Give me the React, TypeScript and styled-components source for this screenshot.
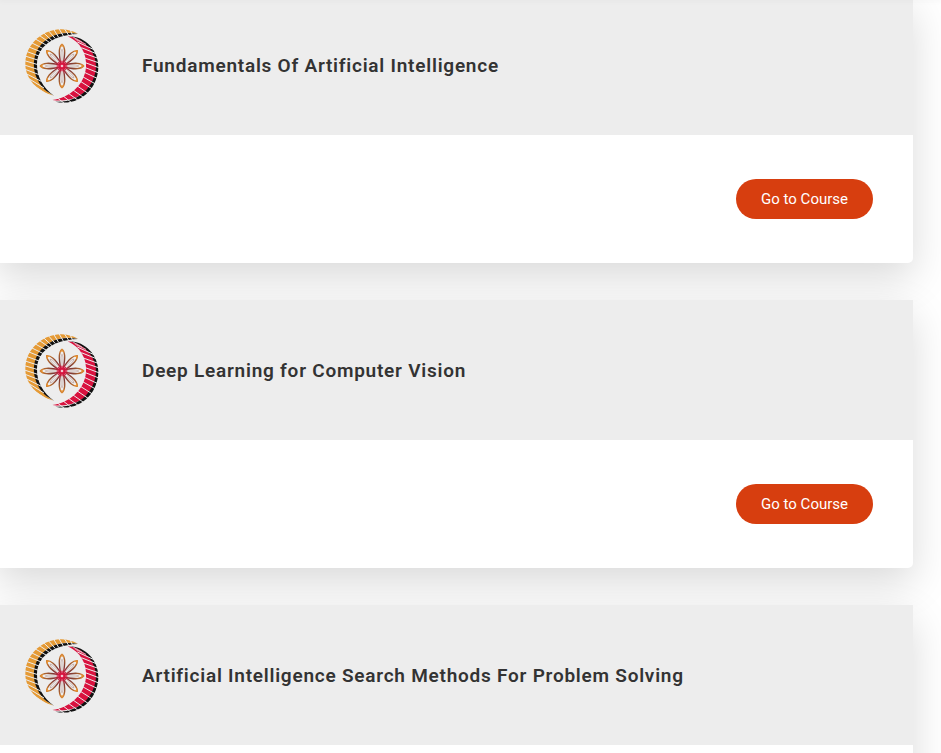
import React from "react";
import styled, { createGlobalStyle } from "styled-components";

const GlobalStyle = createGlobalStyle`
  *, *::before, *::after { box-sizing: border-box; }
  body {
    margin: 0;
    background: #fff;
    color: #333;
    font-family: Roboto, "Liberation Sans", sans-serif;
  }
`;

const Viewport = styled.div`
  height: 100vh;
  overflow: hidden;
`;

const TopBar = styled.div`
  position: relative;
  z-index: 1;
  height: 0;
  box-shadow: 0 0 5px 1px rgba(0, 0, 0, 0.06);
`;

const CourseList = styled.main`
  display: flex;
  flex-direction: column;
  gap: 37px;
  margin: -5px 28px 0 -4px;
`;

const Card = styled.article`
  flex: none;
  background: #fff;
  border-radius: 0 0 5px 5px;
  box-shadow: 0 15px 40px rgba(0, 0, 0, 0.15);
`;

const CardHeader = styled.header`
  display: flex;
  align-items: center;
  gap: 38px;
  height: 140px;
  padding: 2px 24px 0;
  background: #ededed;
`;

const CardTitle = styled.h2`
  margin: 0;
  font-size: 19px;
  font-weight: 600;
  line-height: 28px;
  letter-spacing: 0.04em;
`;

const CardFooter = styled.footer`
  display: flex;
  align-items: center;
  justify-content: flex-end;
  height: 128px;
  padding: 0 40px;
`;

const CourseButton = styled.button`
  height: 40px;
  padding: 0 25px;
  border: 0;
  border-radius: 20px;
  background: #d73e0f;
  color: #fff;
  font: 400 15px/20px Roboto, "Liberation Sans", sans-serif;
  cursor: pointer;
`;

const EmblemSvg = styled.svg`
  flex: none;
  width: 84px;
  height: 84px;
`;

const leftGaps = [
  [128, 6, 146, 34], [112, 6, 130, 36], [96, 8, 116, 40], [80, 14, 106, 44],
  [64, 20, 96, 50], [50, 29, 88, 55], [39, 41, 78, 63], [30, 54, 70, 74],
  [22, 67, 64, 84], [16, 81, 60, 97], [12, 95, 56, 109], [10, 109, 54, 122],
  [10, 122, 56, 137], [10, 134, 60, 153], [14, 147, 64, 172], [20, 160, 72, 192],
  [34, 180, 84, 213], [146, 8, 158, 34],
];

const rightGaps = [
  [172, 54, 222, 77], [184, 71, 234, 91],
  [190, 87, 240, 105], [194, 102, 244, 119], [196, 116, 244, 134],
  [194, 130, 244, 150], [191, 144, 240, 167], [186, 157, 232, 183], [178, 170, 222, 198],
  [166, 182, 210, 212], [152, 193, 196, 224], [138, 203, 180, 233],
  [122, 210, 160, 240], [106, 217, 138, 242],
];

const petals = [0, 45, 90, 135, 180, 225, 270, 315];

function Emblem() {
  const gradient = React.useId();
  return (
    <EmblemSvg viewBox="0 0 252 252" aria-hidden="true">
      <defs>
        <linearGradient id={gradient} gradientUnits="userSpaceOnUse" x1="0" y1="-6" x2="0" y2="-68">
          <stop offset="0" stopColor="#d5173f" />
          <stop offset="0.35" stopColor="#7f3a34" />
          <stop offset="0.7" stopColor="#a8602f" />
          <stop offset="1" stopColor="#e08a2e" />
        </linearGradient>
      </defs>
      <path fill="#e59a35" d="M174 29C145 12 108 11 77 26C38 45 14 82 16 124C18 164 49 201 100 215C66 194 46 161 43 122C42 78 76 36 129 27C145 25 160 27 174 29Z" />
      <path fill="#111" d="M174 30C121 20 82 37 58 68C31 106 37 163 79 201L103 216C68 190 50 157 51 119C53 70 95 33 174 30Z" />
      <path fill="#d9123f" d="M143 37C195 41 231 80 231 127C231 185 182 240 97 228C148 222 193 184 198 130C201 88 181 54 143 37Z" />
      <path fill="#111" d="M148 37C197 38 235 79 235 128C235 190 183 249 106 233C177 238 226 187 228 127C228 82 190 44 148 37Z" />
      <g stroke="#ededed" strokeWidth="3">
        {[...leftGaps, ...rightGaps].map(([x1, y1, x2, y2]) => (
          <line key={`${x1}-${y1}`} x1={x1} y1={y1} x2={x2} y2={y2} />
        ))}
        <path strokeWidth="2" d="M160 40L186 54M166 46L198 61" />
      </g>
      <g transform="translate(126 126)" fill="none">
        {petals.map((angle) => (
          <g key={angle} transform={`rotate(${angle})`}>
            <path stroke={`url(#${gradient})`} strokeWidth="4" d="M-3 -5C-6 -18 -9 -34 -8 -46C-7 -56 -4 -62 0 -65C4 -62 7 -56 8 -46C9 -34 6 -18 3 -5" />
            <path stroke="#8a4a40" strokeWidth="1" d="M-3 -14L-3 -42Q-2 -48 0 -50Q2 -48 3 -42L3 -14" />
            <path stroke="#ee942c" strokeWidth="3" d="M-4 -57Q-2 -61 0 -62Q2 -61 4 -57" />
            <path stroke="#d9123f" strokeWidth="4" d="M0 -4V-16" />
          </g>
        ))}
        <circle r="8" fill="#d9123f" />
        <circle r="4" fill="#f3c4ce" />
      </g>
    </EmblemSvg>
  );
}

const courses = [
  "Fundamentals Of Artificial Intelligence",
  "Deep Learning for Computer Vision",
  "Artificial Intelligence Search Methods For Problem Solving",
];

export default function App() {
  return (
    <Viewport>
      <GlobalStyle />
      <TopBar />
      <CourseList>
        {courses.map((title) => (
          <Card key={title}>
            <CardHeader>
              <Emblem />
              <CardTitle>{title}</CardTitle>
            </CardHeader>
            <CardFooter>
              <CourseButton type="button">Go to Course</CourseButton>
            </CardFooter>
          </Card>
        ))}
      </CourseList>
    </Viewport>
  );
}
